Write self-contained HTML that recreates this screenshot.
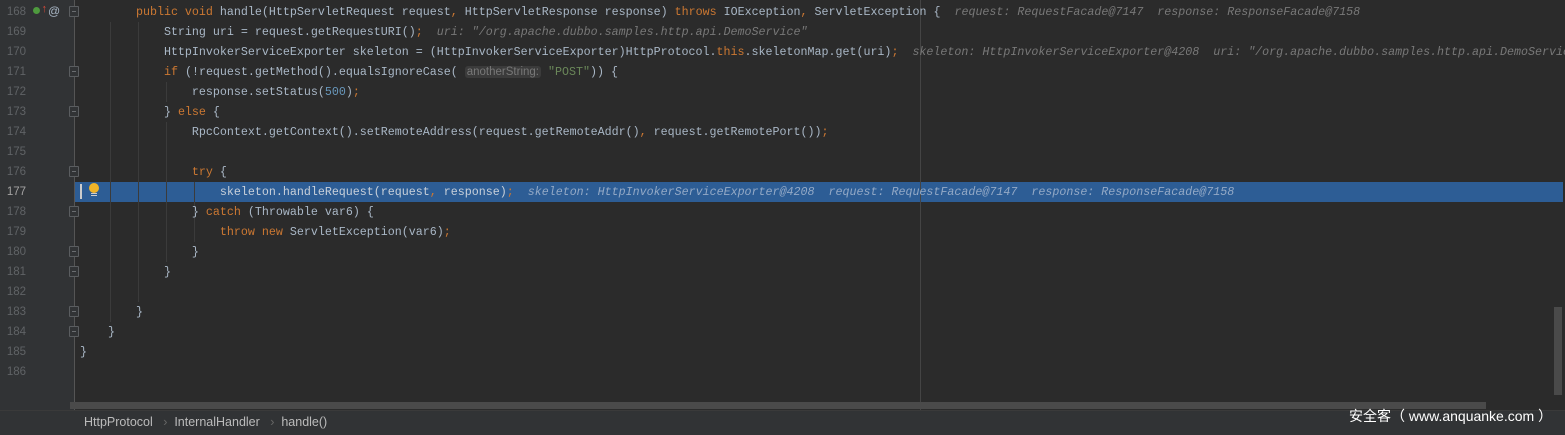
<!DOCTYPE html>
<html><head><meta charset="utf-8"><style>
*{margin:0;padding:0;box-sizing:border-box}
body{width:1565px;height:435px;background:#2b2b2b;position:relative;overflow:hidden;font-family:"Liberation Mono",monospace;font-size:11.67px;color:#a9b7c6}
.gut{position:absolute;left:0;top:0;width:75px;height:410px;background:#313335}
.ln{position:absolute;left:0;width:26px;text-align:right;color:#606366;font-family:"Liberation Sans",sans-serif;font-size:11.5px;height:20px;line-height:20px}
.row{position:absolute;left:80px;height:20px;line-height:20px;white-space:pre}
.k{color:#cc7832}.n{color:#6897bb}.s{color:#6a8759}
.h{color:#787878;font-style:italic}
.hint{background:#3b3b3b;color:#787878;border-radius:3px;padding:0 2px;font-family:"Liberation Sans",sans-serif;font-size:11.5px}
.ig{position:absolute;width:1px;background:#3b3b3b}
.fold{position:absolute;left:69px;width:10px;height:11px;border:1px solid #5a5d60;border-radius:1px;background:#313335}
.fold:after{content:"";position:absolute;left:2px;top:4px;width:4px;height:1px;background:#6a6d70}
</style></head><body>
<div class="gut"></div>
<div style="position:absolute;left:74px;top:0;width:1px;height:410px;background:#555"></div>
<div style="position:absolute;left:75px;top:182px;width:1488px;height:20px;background:#2d5d95"></div>
<div style="position:absolute;left:920px;top:0;width:1px;height:410px;background:#444"></div>
<div class="ig" style="left:110px;top:22px;height:300px"></div>
<div class="ig" style="left:138px;top:22px;height:280px"></div>
<div class="ig" style="left:166px;top:82px;height:20px"></div>
<div class="ig" style="left:166px;top:122px;height:140px"></div>
<div class="ig" style="left:194px;top:182px;height:40px"></div>
<div class="ig" style="left:194px;top:222px;height:20px"></div>
<div class="ln" style="top:2px">168</div><div class="ln" style="top:22px">169</div><div class="ln" style="top:42px">170</div><div class="ln" style="top:62px">171</div><div class="ln" style="top:82px">172</div><div class="ln" style="top:102px">173</div><div class="ln" style="top:122px">174</div><div class="ln" style="top:142px">175</div><div class="ln" style="top:162px">176</div><div class="ln" style="top:182px;color:#a4a3a3">177</div><div class="ln" style="top:202px">178</div><div class="ln" style="top:222px">179</div><div class="ln" style="top:242px">180</div><div class="ln" style="top:262px">181</div><div class="ln" style="top:282px">182</div><div class="ln" style="top:302px">183</div><div class="ln" style="top:322px">184</div><div class="ln" style="top:342px">185</div><div class="ln" style="top:362px">186</div>
<div style="position:absolute;left:33px;top:7px;width:7px;height:7px;border-radius:50%;background:#4e9a3e"></div>
<div style="position:absolute;left:41px;top:4px;color:#d84a3a;font-size:11px;line-height:12px">↑</div>
<div style="position:absolute;left:48px;top:3px;color:#a9b7c6;font-family:'Liberation Sans';font-size:12px;line-height:16px">@</div>
<div class="fold" style="top:6px"></div><div class="fold" style="top:66px"></div><div class="fold" style="top:106px"></div><div class="fold" style="top:166px"></div><div class="fold" style="top:206px"></div><div class="fold" style="top:246px"></div><div class="fold" style="top:266px"></div><div class="fold" style="top:306px"></div><div class="fold" style="top:326px"></div>
<div style="position:absolute;left:80px;top:184px;width:2px;height:15px;background:#ccc"></div>
<div style="position:absolute;left:89px;top:183px;width:10px;height:10px;border-radius:50%;background:#f0b429"></div>
<div style="position:absolute;left:91px;top:193px;width:6px;height:1px;background:#ccc;box-shadow:0 2px 0 #ccc"></div>
<div class="row" style="top:2px">        <span class="k">public void </span>handle(HttpServletRequest request<span class="k">, </span>HttpServletResponse response) <span class="k">throws </span>IOException<span class="k">, </span>ServletException {  <span class="h">request: RequestFacade@7147  response: ResponseFacade@7158</span></div>
<div class="row" style="top:22px">            String uri = request.getRequestURI()<span class="k">;  </span><span class="h">uri: "/org.apache.dubbo.samples.http.api.DemoService"</span></div>
<div class="row" style="top:42px">            HttpInvokerServiceExporter skeleton = (HttpInvokerServiceExporter)HttpProtocol.<span class="k">this</span>.skeletonMap.get(uri)<span class="k">;  </span><span class="h">skeleton: HttpInvokerServiceExporter@4208  uri: "/org.apache.dubbo.samples.http.api.DemoService"</span></div>
<div class="row" style="top:62px">            <span class="k">if </span>(!request.getMethod().equalsIgnoreCase( <span class="hint">anotherString:</span> <span class="s">"POST"</span>)) {</div>
<div class="row" style="top:82px">                response.setStatus(<span class="n">500</span>)<span class="k">;</span></div>
<div class="row" style="top:102px">            } <span class="k">else </span>{</div>
<div class="row" style="top:122px">                RpcContext.getContext().setRemoteAddress(request.getRemoteAddr()<span class="k">, </span>request.getRemotePort())<span class="k">;</span></div>
<div class="row" style="top:162px">                <span class="k">try </span>{</div>
<div class="row" style="top:182px;color:#c8d0da">                    skeleton.handleRequest(request<span class="k">, </span>response)<span class="k">;  </span><span class="h" style="color:#93a9c6">skeleton: HttpInvokerServiceExporter@4208  request: RequestFacade@7147  response: ResponseFacade@7158</span></div>
<div class="row" style="top:202px">                } <span class="k">catch </span>(Throwable var6) {</div>
<div class="row" style="top:222px">                    <span class="k">throw new </span>ServletException(var6)<span class="k">;</span></div>
<div class="row" style="top:242px">                }</div>
<div class="row" style="top:262px">            }</div>
<div class="row" style="top:302px">        }</div>
<div class="row" style="top:322px">    }</div>
<div class="row" style="top:342px">}</div>
<div style="position:absolute;left:70px;top:402px;width:1416px;height:7px;background:#4a4a4a"></div>
<div style="position:absolute;left:1554px;top:307px;width:8px;height:88px;background:#4a4a4a"></div>
<div style="position:absolute;left:0;top:410px;width:1565px;height:25px;background:#313335;border-top:1px solid #3a3a3a"></div>
<div style="position:absolute;left:84px;top:415px;font-family:'Liberation Sans',sans-serif;font-size:12.5px;color:#bbb;white-space:pre">HttpProtocol   <span style="color:#666">›</span>  InternalHandler   <span style="color:#666">›</span>  handle()</div>
<div style="position:absolute;left:1349px;top:406px;font-family:'Liberation Sans','Noto Sans CJK SC',sans-serif;font-size:14px;color:#fff;white-space:pre">安全客（ www.anquanke.com ）</div>
</body></html>
